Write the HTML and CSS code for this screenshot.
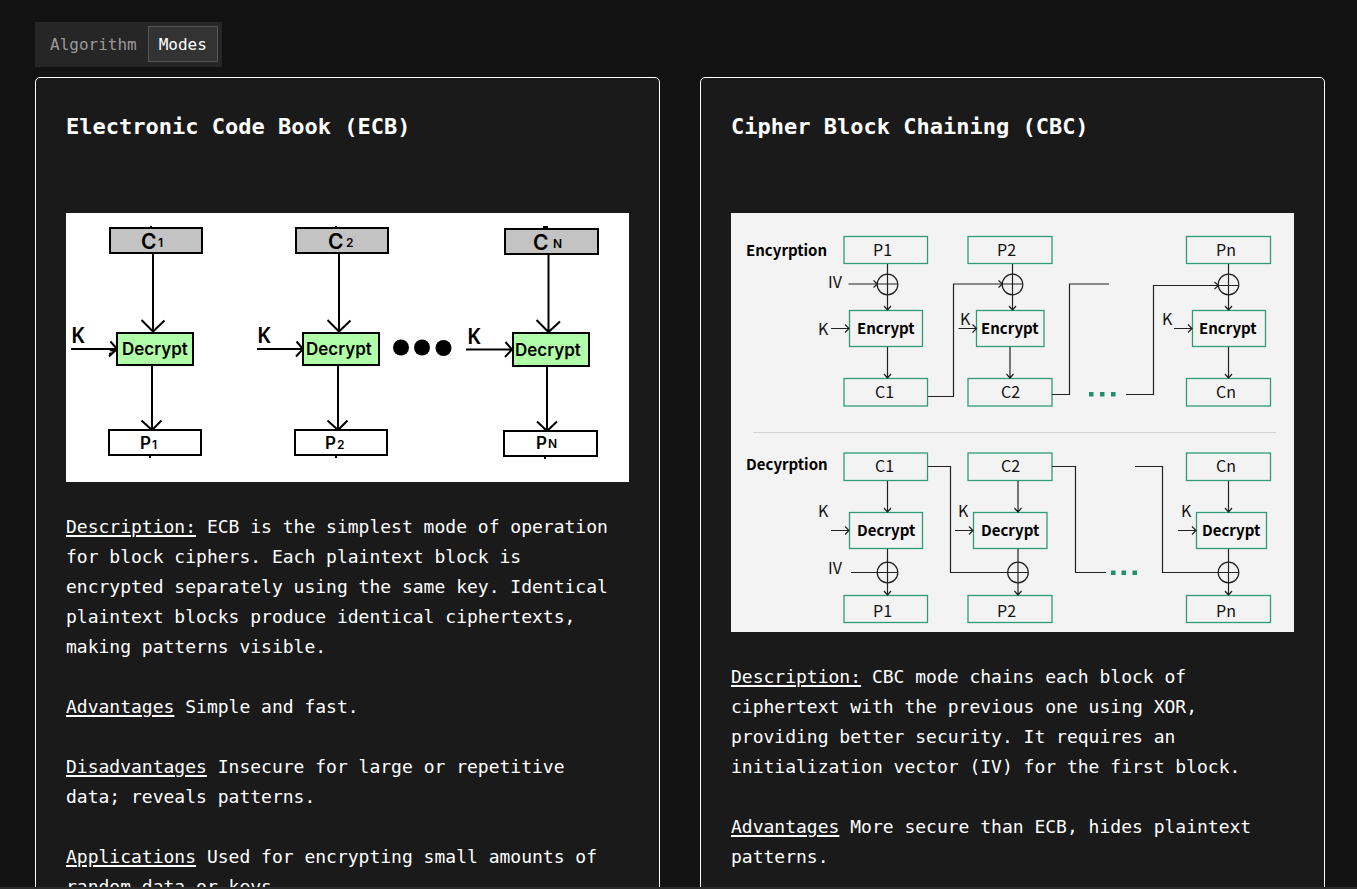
FILE: index.html
```html
<!DOCTYPE html>
<html lang="en">
<head>
<meta charset="utf-8">
<meta name="viewport" content="width=device-width, initial-scale=1">
<title>Block cipher modes</title>
<link rel="stylesheet" href="styles.css">
</head>
<body class="page">
<main class="content">
  <div class="tabs" role="tablist">
    <button class="tab" type="button" role="tab" aria-selected="false">Algorithm</button>
    <button class="tab tab-active" type="button" role="tab" aria-selected="true">Modes</button>
  </div>

  <div class="cards">
    <article class="card">
      <h2 class="card-title">Electronic Code Book (ECB)</h2>
      <svg class="diagram ecb" viewBox="66 213 563 269" role="img" aria-label="ECB decryption diagram">
        <rect class="paper" x="66" y="213" width="563" height="269"/>
        <!-- block 1 -->
        <path class="wire" d="M151 226v2M150 455v3M153 254v78M141.500 320 153 331.500 164.500 320.500M152 366v64M141.500 420.500 152 430l9.500-9.500M71 349h46M110.500 341.500 117 349l-8 7.500M110 350l4 1M109 354l4-1"/>
        <rect class="cipher" x="110" y="228" width="92" height="25"/>
        <rect class="step" x="117" y="333" width="76" height="32"/>
        <rect class="plain" x="109" y="430" width="92" height="25"/>
        <text class="big" x="141" y="249">C</text><text class="sub" x="158" y="247">1</text>
        <text class="key" x="71" y="343">K</text><text class="op" x="122" y="355">Decrypt</text>
        <text class="mid" x="140" y="449">P</text><text class="sub" x="152" y="449">1</text>
        <!-- block 2 -->
        <path class="wire" d="M336 226v2M336 455v3M339 254v78M327.500 320 339 331.500 350.500 320.500M338 366v64M327.500 420.500 338 430l9.500-9.500M257 349h46M296.500 341.500 303 349l-7 7.500"/>
        <rect class="cipher" x="296" y="228" width="92" height="25"/>
        <rect class="step" x="303" y="333" width="76" height="32"/>
        <rect class="plain" x="295" y="430" width="92" height="25"/>
        <text class="big" x="328" y="249">C</text><text class="sub" x="346" y="247">2</text>
        <text class="key" x="257" y="343">K</text><text class="op" x="306" y="355">Decrypt</text>
        <text class="mid" x="325" y="449">P</text><text class="sub" x="337" y="449">2</text>
        <circle cx="401" cy="347.500" r="8"/><circle cx="422" cy="347.500" r="8"/><circle cx="443.500" cy="348" r="8"/>
        <!-- block N -->
        <path class="wire" d="M543 227h5M545 456v3M548.500 255v78M536.500 320 548.500 332 560 321.500M547 366v64M537 421.500 547 431l10-9.500M466 349.500h46M505.500 342 512 349.500l-7 7.500"/>
        <rect class="cipher" x="505" y="229" width="93" height="25"/>
        <rect class="step" x="513" y="333" width="76" height="33"/>
        <rect class="plain" x="504" y="431" width="93" height="25"/>
        <text class="big" x="533" y="250">C</text><text class="sub" x="553" y="248">N</text>
        <text class="key" x="467" y="344">K</text><text class="op" x="515" y="356">Decrypt</text>
        <text class="mid" x="536" y="449">P</text><text class="sub" x="548" y="448">N</text>
      </svg>
      <p class="text"><u>Description:</u> ECB is the simplest mode of operation for block ciphers. Each plaintext block is encrypted separately using the same key. Identical plaintext blocks produce identical ciphertexts, making patterns visible.</p>
      <p class="text"><u>Advantages</u> Simple and fast.</p>
      <p class="text"><u>Disadvantages</u> Insecure for large or repetitive data; reveals patterns.</p>
      <p class="text"><u>Applications</u> Used for encrypting small amounts of random data or keys.</p>
    </article>

    <article class="card">
      <h2 class="card-title">Cipher Block Chaining (CBC)</h2>
      <svg class="diagram cbc" viewBox="731 213 563 419" role="img" aria-label="CBC encryption and decryption diagram">
        <rect class="sheet" x="731" y="213" width="563" height="419"/>
        <path class="divider" d="M753 432.500h523"/>
        <!-- boxes -->
        <g class="box">
          <rect x="844" y="236.500" width="83.500" height="27"/><rect x="968" y="236.500" width="84" height="27"/><rect x="1186.500" y="236.500" width="84" height="27"/>
          <rect x="849.500" y="310.500" width="73" height="36"/><rect x="976.500" y="310.500" width="67.500" height="36"/><rect x="1192.500" y="310.500" width="73" height="36"/>
          <rect x="844" y="378.500" width="83.500" height="27.500"/><rect x="968" y="378.500" width="84" height="27.500"/><rect x="1186.500" y="378.500" width="84" height="27.500"/>
          <rect x="844" y="453" width="83.500" height="27.500"/><rect x="968" y="453" width="84" height="27.500"/><rect x="1186.500" y="453" width="84" height="27.500"/>
          <rect x="849.500" y="512.500" width="73" height="36"/><rect x="973.500" y="512.500" width="73.500" height="36"/><rect x="1196.500" y="512.500" width="70" height="36"/>
          <rect x="844" y="595.500" width="83.500" height="27"/><rect x="968" y="595.500" width="84" height="27"/><rect x="1186.500" y="595.500" width="84" height="27"/>
        </g>
        <!-- encryption wires -->
        <g class="line">
          <circle cx="887.500" cy="284.500" r="10.300"/><circle cx="1012.500" cy="284.500" r="10.300"/><circle cx="1228.500" cy="284.500" r="10.300"/>
          <path d="M887.500 264v46m-3.500-4 3.500 4 3.500-4M1012.500 264v46m-3.500-4 3.500 4 3.500-4M1228.500 264v46m-3.500-4 3.500 4 3.500-4"/>
          <path d="M887.500 347v31m-3.500-4 3.500 4 3.500-4M1010 347v31m-3.500-4 3.500 4 3.500-4M1228.500 347v31m-3.500-4 3.500 4 3.500-4"/>
          <path d="M848.500 284H898M873.500 280.500l4 3.500-4 3.500M831 328.500h18m-4-4 4 4-4 4M958.500 328.500h18m-4-4 4 4-4 4M1174 328.500h18m-4-4 4 4-4 4"/>
          <path d="M928 396.500h25.500V284H1023M998.500 280.500l4 3.500-4 3.500M1052 394.500h17.500V284H1109M1126 394.500h27.500V285.500H1239M1214.500 282l4 3.500-4 3.500"/>
        </g>
        <!-- decryption wires -->
        <g class="line">
          <circle cx="887.500" cy="572.500" r="10.300"/><circle cx="1018" cy="572.500" r="10.300"/><circle cx="1228.500" cy="572.500" r="10.300"/>
          <path d="M887.500 481v31m-3.500-4 3.500 4 3.500-4M1018 481v31m-3.500-4 3.500 4 3.500-4M1228.500 481v31m-3.500-4 3.500 4 3.500-4"/>
          <path d="M887.500 549v46m-3.500-4 3.500 4 3.500-4M1018 549v46m-3.500-4 3.500 4 3.500-4M1228.500 549v46m-3.500-4 3.500 4 3.500-4"/>
          <path d="M831 530.500h18m-4-4 4 4-4 4M955 530.500h18m-4-4 4 4-4 4M1178 530.500h18m-4-4 4 4-4 4M851 572.500h47"/>
          <path d="M928 466.500h22.500v106H1028M1052 466.500h23.500v106H1106M1135 466.500h27.500v106H1239"/>
        </g>
        <path class="dots" d="M1089 392h4.500v4.500h-4.500zM1100 392h4.500v4.500h-4.500zM1111 392h4.500v4.500h-4.500zM1111 570.500h4.500v4.500h-4.500zM1121.500 570.500h4.500v4.500h-4.500zM1132.500 570.500h4.500v4.500h-4.500z"/>
        <!-- labels -->
        <g class="strong">
          <text x="746" y="256">Encyrption</text><text x="746" y="470">Decyrption</text>
          <text x="857" y="334">Encrypt</text><text x="981" y="334">Encrypt</text><text x="1199" y="334">Encrypt</text>
          <text x="857" y="536">Decrypt</text><text x="981" y="536">Decrypt</text><text x="1202" y="536">Decrypt</text>
        </g>
        <g class="label">
          <text x="873" y="256">P1</text><text x="997" y="256">P2</text><text x="1216" y="256">Pn</text>
          <text x="875" y="398">C1</text><text x="1001" y="398">C2</text><text x="1216" y="398">Cn</text>
          <text x="875" y="472">C1</text><text x="1001" y="472">C2</text><text x="1216" y="472">Cn</text>
          <text x="873" y="617">P1</text><text x="997" y="617">P2</text><text x="1216" y="617">Pn</text>
          <text x="828" y="288">IV</text><text x="828" y="574">IV</text>
          <text x="818" y="335">K</text><text x="960" y="325">K</text><text x="1162" y="325">K</text>
          <text x="818" y="517">K</text><text x="958" y="517">K</text><text x="1181" y="517">K</text>
        </g>
      </svg>
      <p class="text"><u>Description:</u> CBC mode chains each block of ciphertext with the previous one using XOR, providing better security. It requires an initialization vector (IV) for the first block.</p>
      <p class="text"><u>Advantages</u> More secure than ECB, hides plaintext patterns.</p>
    </article>
  </div>
</main>
</body>
</html>
```
FILE: styles.css
```css
* {
  box-sizing: border-box;
}

.page {
  margin: 0;
  height: 100vh;
  overflow: hidden;
  display: flex;
  flex-direction: column;
  border-bottom: 2px solid #2a2a2a;
  background: #121212;
  color: #fff;
  font-family: "DejaVu Sans Mono", monospace;
}

.content {
  flex: 1;
  min-height: 0;
  overflow: hidden;
  padding: 22px 32px 0 35px;
}

.tabs {
  display: inline-flex;
  padding: 4px 4px 5px;
  background: #262626;
  vertical-align: top;
}

.tab {
  height: 36px;
  padding: 0 10px;
  border: 1px solid transparent;
  background: transparent;
  color: #999;
  font: 16px "DejaVu Sans Mono", monospace;
}

.tab-active {
  border-color: #555;
  background: #333;
  color: #fff;
}

.cards {
  display: grid;
  grid-template-columns: 1fr 1fr;
  gap: 40px;
  margin-top: 10px;
}

.card {
  padding: 30px;
  border: 1px solid #fff;
  border-radius: 5px;
  background: #1a1a1a;
}

.card-title {
  margin: 0 0 67px;
  font-size: 22px;
  line-height: 38px;
}

.diagram {
  display: block;
  width: 100%;
  height: auto;
}

.text {
  margin: 30px 0 0;
  font-size: 18px;
  line-height: 30px;
}

.text u {
  text-decoration-thickness: 2px;
  text-underline-offset: 2px;
}

.paper,
.plain {
  fill: #fff;
}

.cipher {
  fill: #c3c3c3;
}

.step {
  fill: #b0ffa8;
}

.cipher,
.step,
.plain {
  stroke: #000;
  stroke-width: 2;
}

.wire {
  fill: none;
  stroke: #000;
  stroke-width: 2;
}

.ecb text {
  font-family: Inter, sans-serif;
  font-weight: 600;
}

.ecb .big {
  font-size: 21px;
}

.ecb .key {
  font-family: "Noto Sans", sans-serif;
  font-size: 21px;
}

.ecb .op,
.ecb .mid {
  font-size: 17px;
}

.ecb .sub {
  font-size: 12px;
}

.sheet {
  fill: #f3f3f3;
}

.divider {
  stroke: #d4d4d4;
}

.box {
  fill: none;
  stroke: #2f9c77;
  stroke-width: 1.3;
}

.line {
  fill: none;
  stroke: #222;
  stroke-width: 1.2;
}

.dots {
  fill: #1f9068;
}

.cbc text {
  font-family: "Noto Sans CJK SC", sans-serif;
  font-size: 16px;
  fill: #111;
}

.cbc .strong text {
  font-size: 15px;
  font-weight: 700;
  fill: #000;
}
```
